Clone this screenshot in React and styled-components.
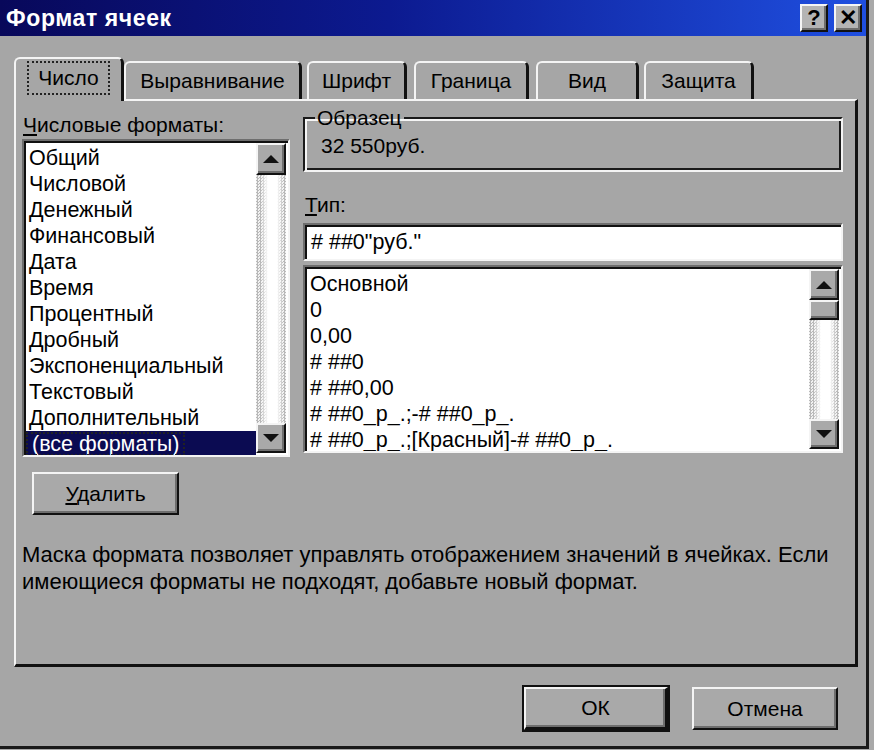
import styled, { createGlobalStyle, css } from "styled-components";

const GlobalStyle = createGlobalStyle`
  html, body {
    margin: 0;
    padding: 0;
    background: #a9a9a9;
  }
  body {
    font-family: "Liberation Sans", Arial, sans-serif;
    color: #000;
  }
`;

const raised = css`
  border-style: solid;
  border-width: 2px;
  border-color: #f4f4f4 #111 #111 #f4f4f4;
  box-shadow: inset -2px -2px 0 #6e6e6e;
`;

const sunken = css`
  border-style: solid;
  border-width: 2px;
  border-color: #6e6e6e #f4f4f4 #f4f4f4 #6e6e6e;
  box-shadow: inset 2px 2px 0 #111;
`;

const Window = styled.div`
  width: 866px;
  height: 746px;
  background: #a6a6a6;
  border-right: 3px solid #1a1a1a;
  border-bottom: 3px solid #1a1a1a;
  display: flex;
  flex-direction: column;
`;

const TitleBar = styled.div`
  height: 36px;
  display: flex;
  align-items: center;
  justify-content: space-between;
  padding: 0 4px 0 6px;
  background: linear-gradient(90deg, #08085a 0%, #0c1a90 45%, #1f4fe0 100%);
`;

const Title = styled.span`
  color: #fff;
  font-weight: bold;
  font-size: 23px;
  letter-spacing: 0.6px;
`;

const CaptionButtons = styled.div`
  display: flex;
  gap: 6px;
`;

const CaptionButton = styled.div`
  ${raised};
  width: 24px;
  height: 24px;
  background: #b4b4b4;
  display: flex;
  align-items: center;
  justify-content: center;
  font-size: 22px;
  font-weight: bold;
  line-height: 1;
`;

const Body = styled.div`
  flex: 1;
  display: flex;
  flex-direction: column;
  padding: 19px 10px 0 14px;
`;

const TabRow = styled.div`
  display: flex;
  align-items: flex-end;
  height: 44px;
  position: relative;
  z-index: 1;
`;

const Tab = styled.div`
  box-sizing: border-box;
  width: ${(p) => p.$width}px;
  margin-right: ${(p) => p.$gap || 0}px;
  height: ${(p) => (p.$active ? 44 : 38)}px;
  margin-bottom: ${(p) => (p.$active ? -2 : 0)}px;
  display: flex;
  align-items: center;
  justify-content: center;
  font-size: 21px;
  background: #a6a6a6;
  border-top: 2px solid #f4f4f4;
  border-left: 2px solid #f4f4f4;
  border-right: 3px solid #111;
  border-radius: 6px 6px 0 0;
  padding-bottom: ${(p) => (p.$active ? 4 : 0)}px;
`;

const FocusRect = styled.span`
  outline: 2px dotted #222;
  outline-offset: ${(p) => p.$offset || 3}px;
  padding: 0 6px;
`;

const Panel = styled.div`
  box-sizing: border-box;
  width: 844px;
  height: 568px;
  border-style: solid;
  border-width: 2px 3px 3px 2px;
  border-color: #f4f4f4 #111 #111 #f4f4f4;
  padding: 13px 12px 0 6px;
  display: flex;
  flex-direction: column;
`;

const Columns = styled.div`
  display: grid;
  grid-template-columns: 268px 540px;
  column-gap: 13px;
`;

const Column = styled.div`
  display: flex;
  flex-direction: column;
`;

const Label = styled.div`
  font-size: 21px;
  line-height: 22px;
  height: 22px;
  margin: ${(p) => p.$margin || "0"};
`;

const ListBox = styled.div`
  ${sunken};
  box-sizing: border-box;
  height: ${(p) => p.$height}px;
  background: #fff;
  display: flex;
  overflow: hidden;
`;

const Items = styled.div`
  flex: 1;
  padding: 4px 0 0 2px;
  overflow: hidden;
`;

const Item = styled.div`
  font-size: 21.5px;
  height: 26px;
  line-height: 26px;
  padding-left: 3px;
  white-space: nowrap;
  ${(p) =>
    p.$selected &&
    css`
      background: #0b0b52;
      color: #fff;
      padding-left: 0;
    `}
`;

const ScrollBar = styled.div`
  width: 30px;
  flex-shrink: 0;
  display: flex;
  flex-direction: column;
  padding: 2px 2px 2px 0;
`;

const ScrollButton = styled.div`
  ${raised};
  box-sizing: border-box;
  height: ${(p) => p.$height || 31}px;
  background: #a9a9a9;
  display: flex;
  align-items: center;
  justify-content: center;
`;

const Arrow = styled.span`
  width: 0;
  height: 0;
  border-left: 8px solid transparent;
  border-right: 8px solid transparent;
  ${(p) =>
    p.$down
      ? css`border-top: 8px solid #111;`
      : css`border-bottom: 8px solid #111;`}
`;

const Track = styled.div`
  flex: 1;
  background:
    linear-gradient(90deg, rgba(255,255,255,0) 15%, #fff 40%, #fff 70%, rgba(255,255,255,0) 92%),
    repeating-conic-gradient(#b9b9b9 0 25%, #f2f2f2 0 50%) 0 0 / 3px 3px;
`;

const GroupBox = styled.fieldset`
  box-sizing: border-box;
  margin: -6px 0 0 0;
  height: 64px;
  padding: 4px 14px 0 16px;
  border-style: solid;
  border-width: 2px;
  border-color: #1a1a1a #f4f4f4 #f4f4f4 #1a1a1a;
  box-shadow: inset 2px 2px 0 #f4f4f4, inset -2px -2px 0 #1a1a1a;
  font-size: 21px;
`;

const Legend = styled.legend`
  padding: 0 2px;
  margin-left: -6px;
  font-size: 21px;
  line-height: 20px;
`;

const Sample = styled.div`
  line-height: 28px;
`;

const TextBox = styled.div`
  ${sunken};
  box-sizing: border-box;
  height: 38px;
  background: #fff;
  font-size: 21.5px;
  line-height: 34px;
  padding-left: 6px;
  margin-bottom: 4px;
`;

const ButtonSlot = styled.div`
  padding: 15px 0 0 10px;
`;

const Button = styled.div`
  ${raised};
  box-sizing: border-box;
  width: ${(p) => p.$width}px;
  height: 43px;
  display: flex;
  align-items: center;
  justify-content: center;
  font-size: 21px;
  background: #a9a9a9;
  ${(p) =>
    p.$default &&
    css`
      outline: 2px solid #111;
      outline-offset: 0;
      border-right-width: 3px;
      border-bottom-width: 3px;
    `}
`;

const Description = styled.p`
  margin: 26px 0 0 0;
  font-size: 22px;
  line-height: 27px;
`;

const Footer = styled.div`
  display: flex;
  justify-content: flex-end;
  gap: 24px;
  padding: 20px 18px 0 0;
`;

const leftItems = [
  "Общий",
  "Числовой",
  "Денежный",
  "Финансовый",
  "Дата",
  "Время",
  "Процентный",
  "Дробный",
  "Экспоненциальный",
  "Текстовый",
  "Дополнительный",
];

const rightItems = [
  "Основной",
  "0",
  "0,00",
  "# ##0",
  "# ##0,00",
  "# ##0_р_.;-# ##0_р_.",
  "# ##0_р_.;[Красный]-# ##0_р_.",
];

const tabs = [
  { name: "Выравнивание", width: 178, gap: 5 },
  { name: "Шрифт", width: 100, gap: 7 },
  { name: "Граница", width: 115, gap: 7 },
  { name: "Вид", width: 103, gap: 5 },
  { name: "Защита", width: 110, gap: 0 },
];

export default function App() {
  return (
    <>
      <GlobalStyle />
      <Window>
        <TitleBar>
          <Title>Формат ячеек</Title>
          <CaptionButtons>
            <CaptionButton>?</CaptionButton>
            <CaptionButton>✕</CaptionButton>
          </CaptionButtons>
        </TitleBar>
        <Body>
          <TabRow>
            <Tab $active $width={110}>
              <FocusRect>Число</FocusRect>
            </Tab>
            {tabs.map((t) => (
              <Tab key={t.name} $width={t.width} $gap={t.gap}>
                {t.name}
              </Tab>
            ))}
          </TabRow>
          <Panel>
            <Columns>
              <Column>
                <Label $margin="0 0 3px 1px">
                  <u>Ч</u>исловые форматы:
                </Label>
                <ListBox $height={318}>
                  <Items>
                    {leftItems.map((it) => (
                      <Item key={it}>{it}</Item>
                    ))}
                    <Item $selected>
                      <FocusRect $offset={-2}>(все форматы)</FocusRect>
                    </Item>
                  </Items>
                  <ScrollBar>
                    <ScrollButton $height={32}>
                      <Arrow />
                    </ScrollButton>
                    <Track />
                    <ScrollButton $height={30}>
                      <Arrow $down />
                    </ScrollButton>
                  </ScrollBar>
                </ListBox>
              </Column>
              <Column>
                <GroupBox>
                  <Legend>Образец</Legend>
                  <Sample>32 550руб.</Sample>
                </GroupBox>
                <Label $margin="22px 0 7px 2px">
                  <u>Т</u>ип:
                </Label>
                <TextBox># ##0"руб."</TextBox>
                <ListBox $height={188}>
                  <Items>
                    {rightItems.map((it) => (
                      <Item key={it}>{it}</Item>
                    ))}
                  </Items>
                  <ScrollBar>
                    <ScrollButton $height={31}>
                      <Arrow />
                    </ScrollButton>
                    <ScrollButton $height={20} />
                    <Track />
                    <ScrollButton $height={30}>
                      <Arrow $down />
                    </ScrollButton>
                  </ScrollBar>
                </ListBox>
              </Column>
            </Columns>
            <ButtonSlot>
              <Button $width={147}>
                <span>
                  <u>У</u>далить
                </span>
              </Button>
            </ButtonSlot>
            <Description>
              Маска формата позволяет управлять отображением значений в ячейках. Если
              имеющиеся форматы не подходят, добавьте новый формат.
            </Description>
          </Panel>
          <Footer>
            <Button $default $width={144}>
              ОК
            </Button>
            <Button $width={146}>Отмена</Button>
          </Footer>
        </Body>
      </Window>
    </>
  );
}
